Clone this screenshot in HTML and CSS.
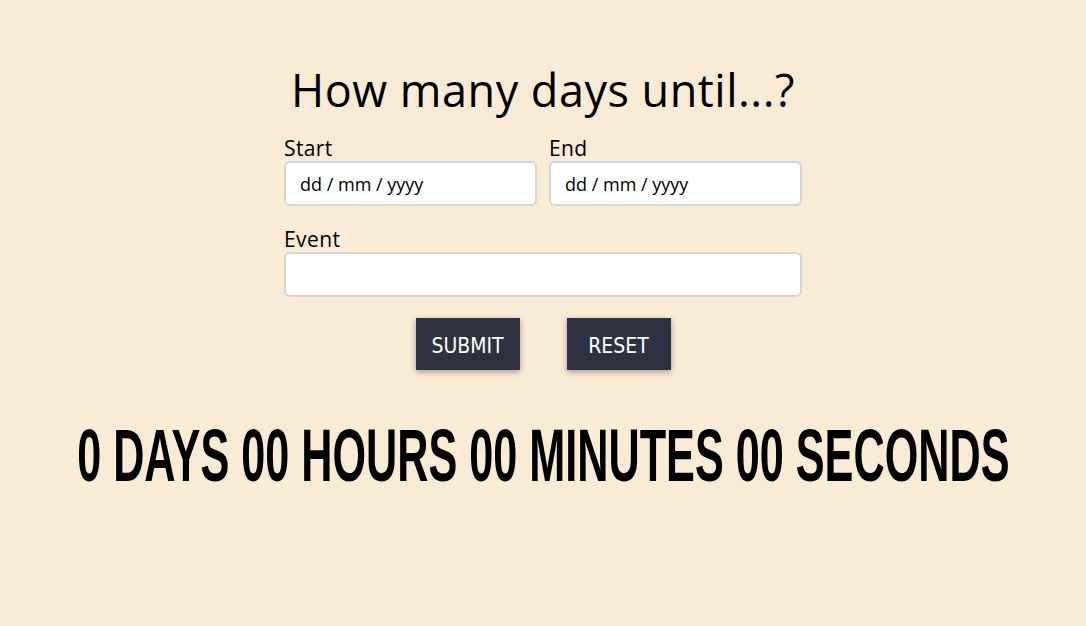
FILE: index.html
```html
<!DOCTYPE html>
<html lang="en">
<head>
<meta charset="utf-8">
<title>How many days until...?</title>
<link rel="stylesheet" href="styles.css">
</head>
<body>
<main class="page">
  <h1 class="title">How many days until...?</h1>
  <form class="form">
    <div class="row">
      <label class="field">
        <span class="label">Start</span>
        <input class="input" type="text" placeholder="dd / mm / yyyy">
      </label>
      <label class="field">
        <span class="label">End</span>
        <input class="input" type="text" placeholder="dd / mm / yyyy">
      </label>
    </div>
    <label class="field event">
      <span class="label">Event</span>
      <input class="input" type="text">
    </label>
    <div class="buttons">
      <button class="btn" type="button">SUBMIT</button>
      <button class="btn" type="button">RESET</button>
    </div>
  </form>
  <div class="countdown"><span class="count-text">0 DAYS 00 HOURS 00 MINUTES 00 SECONDS</span></div>
</main>
</body>
</html>
```

FILE: styles.css
```css
html, body {
  margin: 0;
  padding: 0;
  background: #faebd7;
  height: 100%;
}
.page {
  display: flex;
  flex-direction: column;
  align-items: center;
  padding-top: 62px;
  font-family: "Open Sans", "DejaVu Sans", sans-serif;
  color: #000;
}
.title {
  margin: 0;
  font-weight: 400;
  font-size: 45px;
  line-height: 56px;
  letter-spacing: 0.5px;
}
.form {
  width: 518px;
  margin-top: 17px;
  display: flex;
  flex-direction: column;
}
.row {
  display: flex;
  gap: 12px;
}
.field {
  display: flex;
  flex-direction: column;
  flex: 1 1 0;
  min-width: 0;
}
.label {
  font-size: 21px;
  line-height: 26px;
  font-weight: 500;
  letter-spacing: 0.4px;
}
.input {
  box-sizing: border-box;
  width: 100%;
  min-width: 0;
  height: 45px;
  border: 2px solid #d5d5d5;
  border-radius: 6px;
  background: #fff;
  padding: 0 14px;
  font-family: "Open Sans", "DejaVu Sans", sans-serif;
  font-size: 18px;
  color: #000;
  outline: none;
}
.input::placeholder {
  color: #000;
}
.event {
  margin-top: 20px;
}
.buttons {
  display: flex;
  justify-content: center;
  gap: 47px;
  margin-top: 21px;
}
.btn {
  width: 104px;
  height: 52px;
  border: none;
  background: #2e3142;
  color: #fff;
  font-family: "DejaVu Sans Condensed", "DejaVu Sans", sans-serif;
  font-size: 21px;
  box-shadow: 0 2px 6px rgba(0, 0, 0, 0.35);
  padding: 3px 0 0;
}
.countdown {
  margin-top: 45px;
  display: flex;
  justify-content: center;
  width: 100%;
}
.count-text {
  display: inline-block;
  flex-shrink: 0;
  margin: 0 -348px;
  font-family: "Liberation Sans", Arial, sans-serif;
  font-weight: 700;
  font-size: 75px;
  line-height: 80px;
  white-space: nowrap;
  transform: scaleX(0.576);
  transform-origin: center;
}
```
